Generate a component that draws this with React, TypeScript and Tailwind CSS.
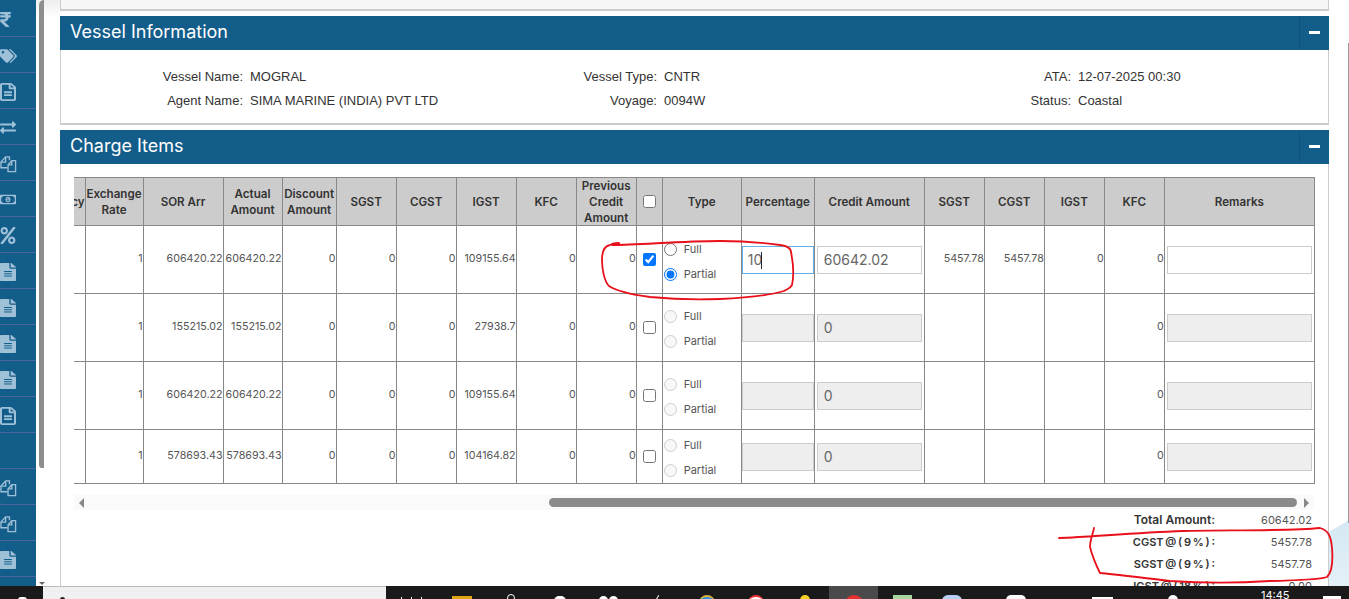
import React from "react";
import {
  FaRupeeSign,
  FaTags,
  FaRegFileAlt,
  FaFileAlt,
  FaExchangeAlt,
  FaRegMoneyBillAlt,
  FaPercent,
} from "react-icons/fa";

// ─── Data ────────────────────────────────────────────────────────────────────

const COL_WIDTHS = [11, 58, 80, 59, 54, 60, 60, 60, 60, 60, 26, 79, 73, 110, 60, 60, 60, 60, 150];

interface ChargeRow {
  sor: string;
  igst: string;
  height: string;
  active?: boolean;
}

const ROWS: ChargeRow[] = [
  { sor: "606420.22", igst: "109155.64", height: "h-[68px]", active: true },
  { sor: "155215.02", igst: "27938.7", height: "h-[68px]" },
  { sor: "606420.22", igst: "109155.64", height: "h-[68px]" },
  { sor: "578693.43", igst: "104164.82", height: "h-[54px]" },
];

// ─── Sidebar ─────────────────────────────────────────────────────────────────

function FilesIcon() {
  return (
    <svg viewBox="0 0 18 18" className="h-[18px] w-[17px]" fill="none" stroke="currentColor" strokeWidth="1.4" aria-hidden="true">
      <path d="M8.500 10 12.500 5.500h4V17h-8z" />
      <path d="M12.500 5.500V10h-4" />
      <path d="M10 5V1.500H6L1 7v6h7" />
      <path d="M6 1.500V7H1" />
    </svg>
  );
}

const fileClass = "h-[18px] w-[16px]";

const SIDEBAR_ITEMS: React.ReactNode[] = [
  <FaRupeeSign className="-ml-[3px] h-[17px] w-[17px]" />,
  <FaTags className="h-[18px] w-[17px]" />,
  <FaRegFileAlt className={fileClass} preserveAspectRatio="none" />,
  <FaExchangeAlt className="h-[17px] w-[16px]" />,
  <FilesIcon />,
  <FaRegMoneyBillAlt className="h-[17px] w-[16px]" />,
  <FaPercent className="h-[17px] w-[16px]" />,
  <FaFileAlt className={fileClass} preserveAspectRatio="none" />,
  <FaFileAlt className={fileClass} preserveAspectRatio="none" />,
  <FaFileAlt className={fileClass} preserveAspectRatio="none" />,
  <FaFileAlt className={fileClass} preserveAspectRatio="none" />,
  <FaRegFileAlt className={fileClass} preserveAspectRatio="none" />,
  null,
  <FilesIcon />,
  <FilesIcon />,
  <FaFileAlt className={fileClass} preserveAspectRatio="none" />,
];

function Sidebar() {
  return (
    <aside className="h-full w-9 shrink-0 overflow-hidden bg-[#135d8a] pt-px">
      {SIDEBAR_ITEMS.map((icon, i) => (
        <div key={i} className="flex h-9 items-center overflow-hidden border-b border-[#4a64a0] pt-[2px] text-[#9fc1d8]">
          {icon}
        </div>
      ))}
    </aside>
  );
}

// ─── Panels ──────────────────────────────────────────────────────────────────

function PanelHeader({ title }: { title: string }) {
  return (
    <div className="flex h-[34px] items-center justify-between bg-[#135d8a] pl-[10px] text-white">
      <h2 className="mb-[3px] font-['Inter',sans-serif] text-[18px] leading-none">{title}</h2>
      <div className="mb-[2px] flex h-[32px] w-[30px] items-center justify-center border-l border-[#0f527c]">
        <span className="h-[3px] w-[11px] bg-white" />
      </div>
    </div>
  );
}

function VesselInfo() {
  const label = "pr-[7px] text-right";
  return (
    <section className="mt-[5px]">
      <PanelHeader title="Vessel Information" />
      <div className="h-[75px] border-x border-b-2 border-[#ccc] bg-white pt-[15px] font-['Liberation_Sans',sans-serif] text-[13px] text-[#333]">
        <div className="grid grid-cols-[189px_310px_104px_294px_120px_1fr] auto-rows-[24px] items-center">
          <div className={label}>Vessel Name:</div>
          <div>MOGRAL</div>
          <div className={label}>Vessel Type:</div>
          <div>CNTR</div>
          <div className={label}>ATA:</div>
          <div>12-07-2025 00:30</div>
          <div className={label}>Agent Name:</div>
          <div>SIMA MARINE (INDIA) PVT LTD</div>
          <div className={label}>Voyage:</div>
          <div>0094W</div>
          <div className={label}>Status:</div>
          <div>Coastal</div>
        </div>
      </div>
    </section>
  );
}

// ─── Table ───────────────────────────────────────────────────────────────────

const th = "border border-[#888] bg-[#ccc] p-0 text-center align-middle text-[11.6px] font-semibold leading-[16px] text-[#333]";
const td = "border border-[#888] p-0 align-middle text-[10.7px] text-[#555]";
const num = `${td} text-right`;
const fieldBase = "h-[28px] border text-[14px] text-[#666] outline-none";

function Field({ value, disabled, width }: { value: string; disabled: boolean; width: string }) {
  return (
    <input
      readOnly
      disabled={disabled}
      value={value}
      className={`${fieldBase} ${width} block border-[#ccc] px-[6px] ${disabled ? "bg-[#eee]" : "bg-white"}`}
    />
  );
}

function TypeRadios({ active, index }: { active: boolean; index: number }) {
  const name = `type-${index}`;
  return (
    <div className={`${active ? "mt-[5px]" : "mt-[3px]"} flex flex-col gap-[12px] pl-[1px] text-[11px] text-[#555]`}>
      <label className="flex h-[13px] items-center gap-[7px]">
        <input type="radio" name={name} disabled={!active} readOnly className="m-0 h-[13px] w-[13px]" />
        Full
      </label>
      <label className="flex h-[13px] items-center gap-[7px]">
        <input type="radio" name={name} disabled={!active} defaultChecked={active} className="m-0 h-[13px] w-[13px]" />
        Partial
      </label>
    </div>
  );
}

function ChargeTable() {
  return (
    <div className="w-[1241px] overflow-hidden">
      <table className="w-[1241px] table-fixed border-collapse font-['Inter',sans-serif]">
        <colgroup>
          {COL_WIDTHS.map((w, i) => (
            <col key={i} style={{ width: w }} />
          ))}
        </colgroup>
        <thead>
          <tr className="h-[48px]">
            <th className={`${th} border-l-0`}>
              <div className="flex justify-end overflow-hidden">cy</div>
            </th>
            <th className={th}>Exchange Rate</th>
            <th className={th}>SOR Arr</th>
            <th className={th}>Actual Amount</th>
            <th className={th}>Discount Amount</th>
            <th className={th}>SGST</th>
            <th className={th}>CGST</th>
            <th className={th}>IGST</th>
            <th className={th}>KFC</th>
            <th className={th}>
              <div className="-my-px">
                Previous
                <br />
                Credit
                <br />
                Amount
              </div>
            </th>
            <th className={th}>
              <div className="flex justify-center">
                <input type="checkbox" className="m-0 h-[13px] w-[13px]" />
              </div>
            </th>
            <th className={th}>Type</th>
            <th className={th}>Percentage</th>
            <th className={th}>Credit Amount</th>
            <th className={th}>SGST</th>
            <th className={th}>CGST</th>
            <th className={th}>IGST</th>
            <th className={th}>KFC</th>
            <th className={th}>Remarks</th>
          </tr>
        </thead>
        <tbody>
          {ROWS.map((row, i) => (
            <tr key={i} className={row.height}>
              <td className={`${td} border-l-0`} />
              <td className={num}>1</td>
              <td className={num}>{row.sor}</td>
              <td className={num}>{row.sor}</td>
              <td className={num}>0</td>
              <td className={num}>0</td>
              <td className={num}>0</td>
              <td className={num}>{row.igst}</td>
              <td className={num}>0</td>
              <td className={num}>0</td>
              <td className={td}>
                <div className="flex justify-center">
                  <input type="checkbox" readOnly checked={!!row.active} className="m-0 h-[13px] w-[13px]" />
                </div>
              </td>
              <td className={td}>
                <TypeRadios active={!!row.active} index={i} />
              </td>
              <td className={td}>
                {row.active ? (
                  <div className="relative">
                    <input
                      readOnly
                      value="10"
                      className={`${fieldBase} block w-[72px] border-[#66afe9] bg-white px-[5px] text-left`}
                    />
                    <span className="absolute left-[19px] top-[6px] h-[17px] w-px bg-[#222]" />
                  </div>
                ) : (
                  <Field value="" disabled width="w-[72px]" />
                )}
              </td>
              <td className={`${td} pl-[2px]`}>
                <Field value={row.active ? "60642.02" : "0"} disabled={!row.active} width="w-[105px]" />
              </td>
              <td className={num}>{row.active ? "5457.78" : ""}</td>
              <td className={num}>{row.active ? "5457.78" : ""}</td>
              <td className={num}>{row.active ? "0" : ""}</td>
              <td className={num}>0</td>
              <td className={`${td} px-[2px]`}>
                <Field value="" disabled={!row.active} width="w-[145px]" />
              </td>
            </tr>
          ))}
        </tbody>
      </table>
    </div>
  );
}

function TableScrollbar() {
  return (
    <div className="mt-[11px] flex h-[15px] w-[1240px] items-center bg-[#fafafa]">
      <svg viewBox="0 0 5 10" className="ml-[5px] h-[10px] w-[5px] fill-[#888]" aria-hidden="true">
        <path d="M5 0v10L0 5z" />
      </svg>
      <div className="ml-[465px] h-[9px] w-[748px] rounded-full bg-[#8a8a8a]" />
      <svg viewBox="0 0 5 10" className="ml-[7px] h-[10px] w-[5px] fill-[#888]" aria-hidden="true">
        <path d="M0 0v10l5-5z" />
      </svg>
    </div>
  );
}

function Totals() {
  const taxLabel = "text-[11px] font-semibold [word-spacing:-1px]";
  const rows = [
    ["Total Amount:", "60642.02", "text-[12px] font-semibold"],
    ["CGST @ ( 9 % ) :", "5457.78", taxLabel],
    ["SGST @ ( 9 % ) :", "5457.78", taxLabel],
    ["IGST @ ( 18 % ) :", "0.00", taxLabel],
  ];
  return (
    <div className="-mt-px font-['Inter',sans-serif] text-[#333]">
      {rows.map(([label, value, labelClass]) => (
        <div key={label} className="flex h-[22px] w-[1238px] items-center justify-end">
          <span className={labelClass}>{label}</span>
          <span className="w-[97px] text-right text-[11px] text-[#555]">{value}</span>
        </div>
      ))}
    </div>
  );
}

// ─── Taskbar ─────────────────────────────────────────────────────────────────

function Taskbar() {
  const slot = "flex h-full w-[49px] shrink-0 justify-center";
  return (
    <footer className="relative z-10 flex h-[13px] shrink-0 overflow-hidden bg-[#1a1a1a]">
      <div className="flex w-[43px] shrink-0 justify-center pl-[2px] pt-[11px]">
        <span className="h-[3px] w-[9px] rounded-t-sm bg-white" />
      </div>
      <div className="w-[343px] shrink-0 border-t border-[#bbb] bg-[#f0f0f0] pl-[17px] pt-[10px]">
        <span className="block h-[3px] w-[5px] rounded-t-full bg-[#222]" />
      </div>
      <div className={`${slot} w-[51px] gap-[9px] pt-[11px]`}>
        <span className="h-[3px] w-px bg-white" />
        <span className="h-[3px] w-px bg-white" />
        <span className="h-[3px] w-px bg-white" />
      </div>
      <div className={`${slot} pt-[10px]`}>
        <span className="h-[3px] w-[20px] bg-[#e0a514]" />
      </div>
      <div className={`${slot} pt-[8px]`}>
        <span className="h-[8px] w-[8px] rounded-full border border-white" />
      </div>
      <div className={`${slot} pt-[10px]`}>
        <span className="h-[5px] w-[12px] rounded-t-full bg-white" />
      </div>
      <div className={`${slot} gap-px pt-[10px]`}>
        <span className="h-[5px] w-[9px] rounded-t-full bg-white" />
        <span className="h-[5px] w-[9px] rounded-t-full bg-white" />
      </div>
      <div className={`${slot} pt-[9px]`}>
        <span className="h-[5px] w-px rotate-[30deg] bg-white" />
      </div>
      <div className={`${slot} pt-[9px]`}>
        <span className="h-[8px] w-[16px] rounded-t-full border-t-2 border-[#e3b23c] bg-[#2d8fd5]" />
      </div>
      <div className={`${slot} pt-[9px]`}>
        <span className="h-[8px] w-[16px] rounded-t-full border-t-2 border-[#e33] bg-white" />
      </div>
      <div className={`${slot} pt-[9px]`}>
        <span className="h-[8px] w-[10px] rounded-t-full bg-[#f4d21f]" />
      </div>
      <div className={`${slot} bg-[#4a4a4a] pt-[9px]`}>
        <span className="h-[12px] w-[20px] rounded-t-full bg-[#e53030]" />
      </div>
      <div className={`${slot} pt-[9px]`}>
        <span className="h-[8px] w-[19px] bg-[#a9d5a0]" />
      </div>
      <div className={`${slot} pt-[9px]`}>
        <span className="h-[8px] w-[20px] rounded-t-md bg-[#b9cdf0]" />
      </div>
      <span className="ml-[30px] mt-[9px] h-[5px] w-[20px] rounded-t-full bg-white" />
      <span className="ml-[66px] mt-[11px] h-[3px] w-[21px] bg-white" />
      <span className="ml-[55px] mt-[9px] h-[5px] w-[10px] rounded-t-full bg-white" />
      <span className="ml-[83px] font-['Inter',sans-serif] text-[11px] leading-[18px] text-white">14:45</span>
      <span className="ml-[33px] mt-[10px] h-[3px] w-[18px] bg-white" />
    </footer>
  );
}

// ─── Annotations ─────────────────────────────────────────────────────────────

function RedMarks() {
  return (
    <svg
      className="pointer-events-none absolute left-0 top-0 z-20 h-[599px] w-[1349px]"
      viewBox="0 0 1349 599"
      fill="none"
      stroke="#e8101a"
      strokeWidth="1.8"
      strokeLinecap="round"
      strokeLinejoin="round"
      aria-hidden="true"
    >
      <path d="M619 243 C614 243 610 244 612 245 C640 245 680 241 720 241 C745 241 765 243 780 245 C788 246 791 248 791 252 C793 262 794 276 792 285 C790 289 787 289 784 291 C770 295 745 298 720 299 C695 300 670 299 650 297 C635 295 618 292 609 286 C604 281 602 268 602 260 C602 252 604 246 610 245" />
      <path d="M1059 538 C1090 537 1130 533 1183 531 C1230 530 1290 531 1320 528 C1328 530 1331 536 1332 548 C1333 560 1332 572 1327 577 C1320 580 1300 580 1270 581 C1240 583 1200 583 1170 581 C1145 578 1120 575 1100 573 C1096 565 1092 555 1090 547 C1090 540 1093 534 1094 528" />
    </svg>
  );
}

// ─── App ─────────────────────────────────────────────────────────────────────

export default function App() {
  return (
    <div className="relative flex h-[599px] w-[1349px] flex-col overflow-hidden bg-white">
      {/* Hiasan latar belakang halaman */}
      <div className="absolute bottom-[13px] left-[44px] h-[41px] w-[16px] bg-gradient-to-b from-[#cfe5f2] to-[#e8f3f9] [clip-path:polygon(0_0,100%_18%,100%_100%,0_100%)]" />
      <div className="absolute bottom-[13px] right-0 h-[66px] w-[20px] bg-gradient-to-b from-[#d5e8f3] to-[#e4f0f8] [clip-path:polygon(100%_0,100%_100%,0_100%,0_18%)]" />
      <div className="absolute right-0 top-[43px] h-[480px] w-px bg-[#999]" />

      <div className="flex min-h-0 flex-1">
        <Sidebar />

        {/* Scrollbar halaman */}
        <div className="relative w-6 shrink-0 bg-gradient-to-b from-[#eee] to-white to-[3%]">
          <div className="ml-[3px] h-[468px] w-[5px] rounded-bl-sm rounded-tl-md bg-[#8e8e8e]" />
          <svg viewBox="0 0 6 3" className="absolute left-[3px] top-[582px] h-[3px] w-[6px] fill-[#666]" aria-hidden="true">
            <path d="M0 0h6L3 3z" />
          </svg>
        </div>

        <main className="relative w-[1269px] shrink-0 overflow-hidden">
          <div className="h-[11px] border-x border-b-2 border-[#ccc] bg-[#f6f6f6]" />
          <VesselInfo />
          <section className="mt-[5px]">
            <PanelHeader title="Charge Items" />
            <div className="h-[440px] border-x border-[#ccc] bg-white pl-[13px] pt-[13px]">
              <ChargeTable />
              <TableScrollbar />
              <Totals />
            </div>
          </section>
        </main>
      </div>

      <Taskbar />
      <RedMarks />
    </div>
  );
}
